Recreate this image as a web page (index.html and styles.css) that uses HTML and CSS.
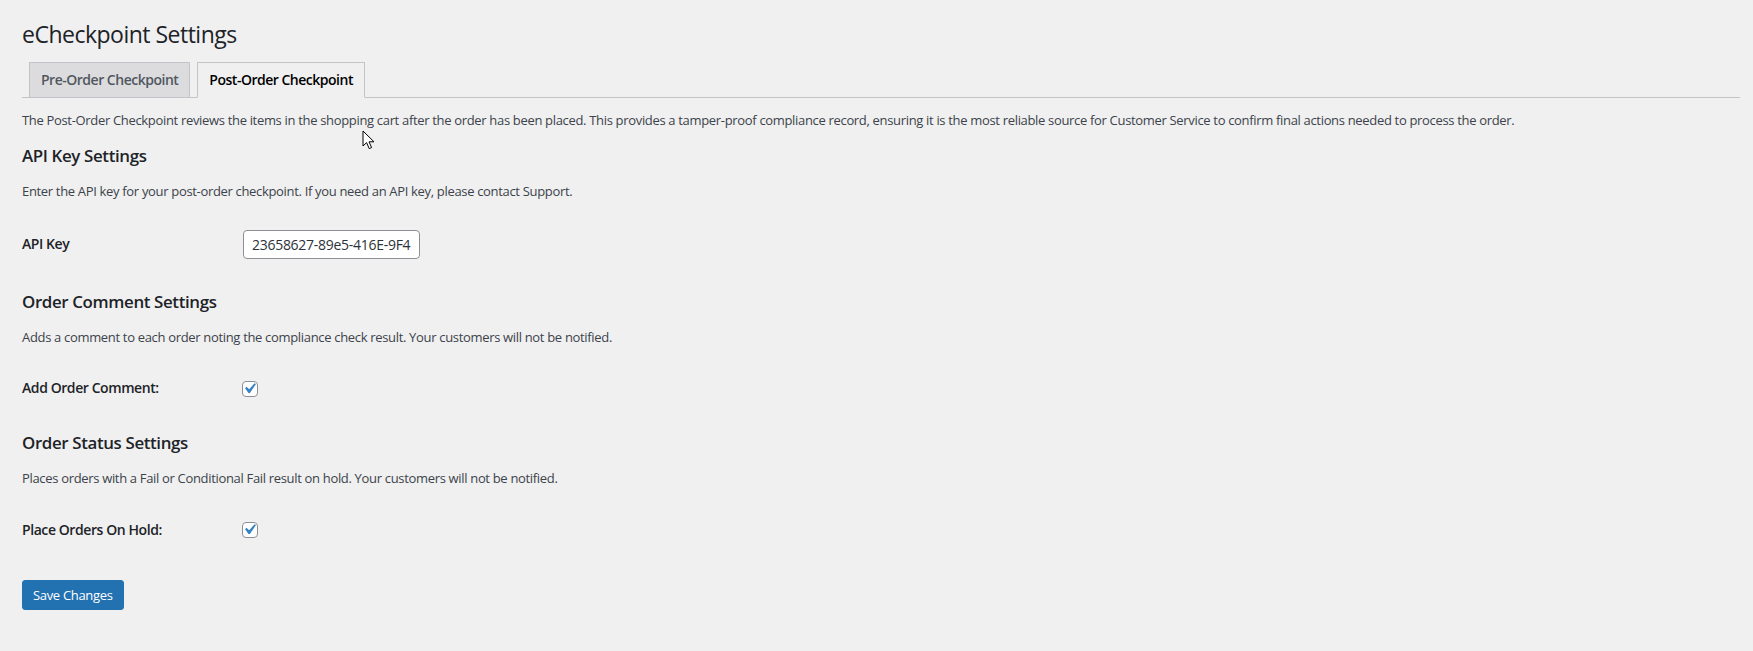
FILE: index.html
```html
<!DOCTYPE html>
<html lang="en">
<head>
<meta charset="utf-8">
<title>eCheckpoint Settings</title>
<link rel="stylesheet" href="styles.css">
</head>
<body>
<div class="wrap">
  <h1 class="page-title">eCheckpoint Settings</h1>
  <nav class="nav-tab-wrapper">
    <a class="nav-tab" href="#">Pre-Order Checkpoint</a>
    <a class="nav-tab nav-tab-active" href="#">Post-Order Checkpoint</a>
  </nav>
  <p class="intro">The Post-Order Checkpoint reviews the items in the shopping cart after the order has been placed. This provides a tamper-proof compliance record, ensuring it is the most reliable source for Customer Service to confirm final actions needed to process the order.</p>

  <form class="settings-form">
    <h2 class="section-title">API Key Settings</h2>
    <p class="section-desc">Enter the API key for your post-order checkpoint. If you need an API key, please contact Support.</p>
    <div class="field-row">
      <label class="field-label" for="api-key">API Key</label>
      <div class="field-control field-control-input">
        <input id="api-key" class="text-input" type="text" value="23658627-89e5-416E-9F4">
      </div>
    </div>

    <h2 class="section-title">Order Comment Settings</h2>
    <p class="section-desc">Adds a comment to each order noting the compliance check result. Your customers will not be notified.</p>
    <div class="field-row">
      <label class="field-label field-label-check" for="add-comment">Add Order Comment:</label>
      <div class="field-control field-control-check">
        <span class="checkbox">
          <input id="add-comment" type="checkbox" checked>
          <svg class="checkmark" viewBox="0 0 20 20" aria-hidden="true"><path d="M14.83 4.89l1.34.94-5.81 8.38H9.02L5.78 9.67l1.34-1.25 2.57 2.4z"/></svg>
        </span>
      </div>
    </div>

    <h2 class="section-title">Order Status Settings</h2>
    <p class="section-desc">Places orders with a Fail or Conditional Fail result on hold. Your customers will not be notified.</p>
    <div class="field-row">
      <label class="field-label field-label-check" for="on-hold">Place Orders On Hold:</label>
      <div class="field-control field-control-check">
        <span class="checkbox">
          <input id="on-hold" type="checkbox" checked>
          <svg class="checkmark" viewBox="0 0 20 20" aria-hidden="true"><path d="M14.83 4.89l1.34.94-5.81 8.38H9.02L5.78 9.67l1.34-1.25 2.57 2.4z"/></svg>
        </span>
      </div>
    </div>

    <div class="submit-row">
      <button type="button" class="button-primary">Save Changes</button>
    </div>
  </form>
</div>
<svg class="cursor" viewBox="0 0 13 20" aria-hidden="true"><path d="M1 1 L1 16 L4.6 12.6 L7.2 18.6 L9.6 17.6 L7 11.8 L12 11.8 Z" fill="#fff" stroke="#000" stroke-width="1" stroke-linejoin="round"/></svg>
</body>
</html>
```

FILE: styles.css
```css
* { box-sizing: border-box; }

html, body {
  margin: 0;
  padding: 0;
  background: #f0f0f1;
}

body {
  font-family: "Open Sans", "Noto Sans", "Liberation Sans", sans-serif;
  font-size: 13px;
  line-height: 18.2px;
  letter-spacing: -0.025em;
  color: #3c434a;
  position: relative;
  min-height: 651px;
}

.wrap {
  padding: 20px 13px 0 22px;
}

.page-title {
  margin: 0 0 12px;
  font-size: 23px;
  font-weight: 400;
  line-height: 29.9px;
  letter-spacing: -0.022em;
  color: #1d2327;
}

.nav-tab-wrapper {
  display: flex;
  border-bottom: 1px solid #c3c4c7;
  height: 36px;
}

.nav-tab {
  display: block;
  margin-left: 7px;
  margin-bottom: -1px;
  padding: 5px 11px;
  font-size: 14px;
  line-height: 24px;
  font-weight: 600;
  letter-spacing: -0.035em;
  color: #50575e;
  background: #dcdcde;
  border: 1px solid #c3c4c7;
  text-decoration: none;
  white-space: nowrap;
}

.nav-tab-active {
  background: #f0f0f1;
  color: #000;
  border-bottom-color: #f0f0f1;
}

.intro {
  margin: 13px 0 0;
  line-height: 19.5px;
}

.settings-form {
  margin: 0;
}

.section-title {
  margin: 16.9px 0 0;
  font-size: 16.9px;
  line-height: 18.2px;
  font-weight: 600;
  letter-spacing: -0.022em;
  color: #1d2327;
}

.section-desc {
  margin: 16.9px 0 0;
  line-height: 19.5px;
}

.field-row {
  display: grid;
  grid-template-columns: 220px 1fr;
  margin-top: 13px;
}

.field-label {
  padding: 21px 0 19px;
  font-size: 14px;
  line-height: 16.9px;
  font-weight: 600;
  letter-spacing: -0.03em;
  color: #1d2327;
}

.field-label-check {
  padding: 20px 0 18px;
}

.field-control {
  padding: 15px 0;
  line-height: 30px;
}

.field-control-input {
  padding-bottom: 17px;
}

.field-control-check {
  padding: 14px 0 13px;
}

.text-input {
  display: block;
  width: 177px;
  height: 29px;
  margin: 0 0 0 1px;
  padding: 0 8px;
  font-family: inherit;
  font-size: 14px;
  letter-spacing: -0.02em;
  color: #2c3338;
  background: #fff;
  border: 1px solid #8c8f94;
  border-radius: 4px;
}

.checkbox {
  position: relative;
  display: inline-block;
  width: 16px;
  height: 16px;
  vertical-align: middle;
  margin-top: -4px;
}

.checkbox input {
  appearance: none;
  -webkit-appearance: none;
  display: block;
  width: 16px;
  height: 16px;
  margin: 0;
  background: #fff;
  border: 1px solid #8c8f94;
  border-radius: 4px;
}

.checkmark {
  position: absolute;
  left: -3px;
  top: -3px;
  width: 21px;
  height: 21px;
  fill: #3582c4;
  pointer-events: none;
}

.submit-row {
  margin-top: 21px;
}

.button-primary {
  display: block;
  height: 30px;
  padding: 0 10px;
  font-family: inherit;
  font-size: 13px;
  line-height: 28px;
  letter-spacing: -0.025em;
  color: #fff;
  background: #2271b1;
  border: 1px solid #2271b1;
  border-radius: 3px;
}

.cursor {
  position: absolute;
  left: 362px;
  top: 130px;
  width: 13px;
  height: 20px;
}
```
